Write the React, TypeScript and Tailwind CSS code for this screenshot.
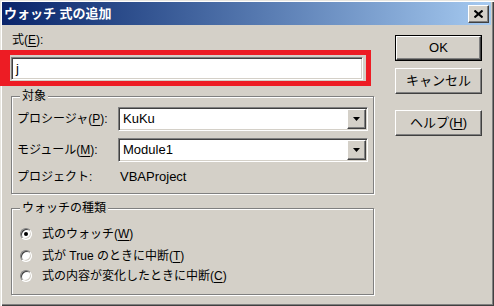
import type { ReactNode } from 'react'

const face = 'bg-[#d4d0c8]'
const raised = 'border border-t-white border-l-white border-r-[#404040] border-b-[#404040] shadow-[inset_-1px_-1px_0_#808080]'
const sunken = 'border border-t-[#808080] border-l-[#808080] border-r-white border-b-white shadow-[inset_1px_1px_0_#404040,inset_-1px_-1px_0_#d4d0c8]'

function Key({ children }: { children: ReactNode }) {
  return <span className="underline underline-offset-[2px]">{children}</span>
}

function CloseButton() {
  return (
    <div className={`${face} ${raised} w-[21px] h-[18px] flex items-center justify-center`}>
      <svg width="9" height="8" viewBox="0 0 9 8">
        <path d="M0.5 0.5 L8.5 7.5 M8.5 0.5 L0.5 7.5" stroke="#000" strokeWidth="2" />
      </svg>
    </div>
  )
}

function PushButton({ children, isDefault }: { children: ReactNode; isDefault?: boolean }) {
  if (isDefault) {
    return (
      <div className="border border-black h-[26px]">
        <div className={`${face} ${raised} h-full flex items-center justify-center text-[13px]`}>{children}</div>
      </div>
    )
  }
  return <div className={`${face} ${raised} h-[26px] flex items-center justify-center text-[13px]`}>{children}</div>
}

function ComboBox({ value }: { value: string }) {
  return (
    <div className={`${sunken} bg-white w-[250px] h-[24px] flex items-stretch p-[1px]`}>
      <div className="flex-1 flex items-center pl-[3px] text-[13px]">{value}</div>
      <div className={`${face} ${raised} w-[19px] flex items-center justify-center`}>
        <svg width="7" height="4" viewBox="0 0 7 4">
          <path d="M0 0 H7 L3.5 4 Z" fill="#000" />
        </svg>
      </div>
    </div>
  )
}

function Radio({ checked, children }: { checked?: boolean; children: ReactNode }) {
  return (
    <div className="flex items-center h-[20px] gap-[10px]">
      <div className="w-[12px] h-[12px] rounded-full bg-white border border-t-[#808080] border-l-[#808080] border-r-white border-b-white shadow-[inset_1px_1px_0_#404040,inset_-1px_-1px_0_#d4d0c8] flex items-center justify-center">
        {checked && <div className="w-[4px] h-[4px] rounded-full bg-black" />}
      </div>
      <span className="text-[12px]">{children}</span>
    </div>
  )
}

export default function App() {
  return (
    <div className={`${face} w-[494px] h-[306px] relative overflow-hidden p-[2px] pr-[3px] pb-[3px] flex flex-col text-black font-['Liberation_Sans','Noto_Sans_CJK_JP',sans-serif] shadow-[inset_1px_1px_0_#e8e6e0,inset_2px_2px_0_#fff,inset_-1px_-1px_0_#404040,inset_-2px_-2px_0_#808080]`}>
      {/* title bar */}
      <div className="h-[23px] bg-gradient-to-r from-[#0a246a] to-[#a6caf0] flex items-center justify-between pl-[2px] pr-[2px]">
        <span className="text-white font-bold text-[13px] leading-none">ウォッチ 式の追加</span>
        <CloseButton />
      </div>

      <div className="flex flex-1">
        {/* left column */}
        <div className="ml-[9px] w-[363px] pt-[8px] flex flex-col">
          <div className="h-[14px] leading-[14px] text-[12px] pl-[1px]">
            式(<Key>E</Key>):
          </div>
          <div className={`${sunken} bg-white mt-[10px] w-[352px] h-[23px] flex items-center pl-[4px] text-[13px]`}>j</div>

          <fieldset className="mt-[9px] border border-[#808080] pl-[5px] pr-[5px] pt-[4px] pb-[8px] shadow-[1px_1px_0_#fff,inset_1px_1px_0_#fff]">
            <legend className="ml-[3px] px-[2px] bg-[#d4d0c8] text-[12px] leading-[14px]">対象</legend>
            <div className="flex items-center h-[24px]">
              <span className="w-[101px] text-[12px]">
                プロシージャ(<Key>P</Key>):
              </span>
              <ComboBox value="KuKu" />
            </div>
            <div className="flex items-center h-[24px] mt-[7px]">
              <span className="w-[101px] text-[12px]">
                モジュール(<Key>M</Key>):
              </span>
              <ComboBox value="Module1" />
            </div>
            <div className="flex items-center h-[16px] mt-[7px]">
              <span className="w-[103px] text-[12px]">プロジェクト:</span>
              <span className="text-[13px]">VBAProject</span>
            </div>
          </fieldset>

          <fieldset className="mt-[7px] border border-[#808080] pl-[8px] pt-[9px] pb-[8px] shadow-[1px_1px_0_#fff,inset_1px_1px_0_#fff]">
            <legend className="px-[2px] bg-[#d4d0c8] text-[12px] leading-[14px]">ウォッチの種類</legend>
            <Radio checked>
              式のウォッチ(<Key>W</Key>)
            </Radio>
            <div className="mt-[2px]">
              <Radio>
                式が True のときに中断(<Key>T</Key>)
              </Radio>
            </div>
            <Radio>
              式の内容が変化したときに中断(<Key>C</Key>)
            </Radio>
          </fieldset>
        </div>

        {/* right column */}
        <div className="ml-[21px] w-[87px] pt-[10px] flex flex-col">
          <PushButton isDefault>OK</PushButton>
          <div className="mt-[7px]">
            <PushButton>キャンセル</PushButton>
          </div>
          <div className="mt-[16px]">
            <PushButton>
              ヘルプ(<Key>H</Key>)
            </PushButton>
          </div>
        </div>
      </div>

      {/* red highlight drawn over the expression field */}
      <div className="absolute left-0 top-[50px] w-[371px] h-[36px] border-[5px] border-l-[10px] border-[#ed1c24] pointer-events-none" />
    </div>
  )
}
